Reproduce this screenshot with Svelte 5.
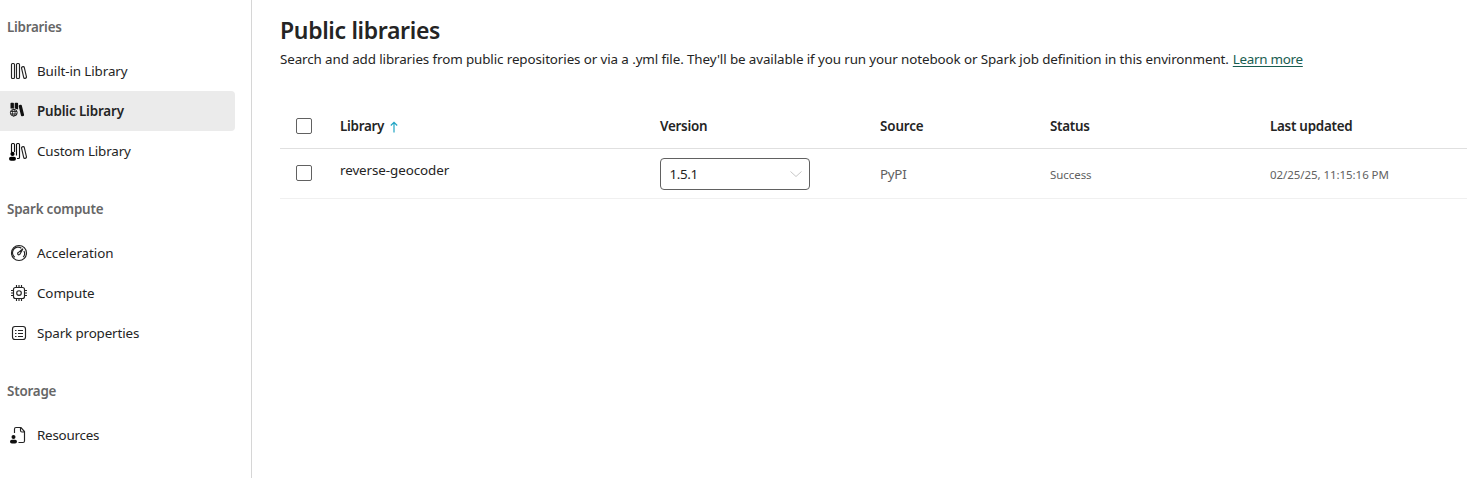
<script>
  const groups = [
    { title: 'Libraries', ls: -0.26, items: [
      { label: 'Built-in Library', icon: 'books', ls: -0.1 },
      { label: 'Public Library', icon: 'public', active: true, ls: -0.15 },
      { label: 'Custom Library', icon: 'custom', ls: -0.16 }
    ] },
    { title: 'Spark compute', ls: -0.19, items: [
      { label: 'Acceleration', icon: 'gauge', ls: -0.09 },
      { label: 'Compute', icon: 'chip', ls: -0.09 },
      { label: 'Spark properties', icon: 'list', ls: -0.14 }
    ] },
    { title: 'Storage', ls: -0.2, items: [{ label: 'Resources', icon: 'resources', ls: -0.24 }] }
  ];
</script>

<div class="page">
  <nav>
    {#each groups as g}
      <section>
        <h2><span style:letter-spacing="{g.ls}px">{g.title}</span></h2>
        {#each g.items as item}
          <div class="item" class:active={item.active}>
            <svg class="icon" viewBox="0 0 20 20" fill="none" stroke="#242424" stroke-width="1.15">
              {#if item.icon === 'books'}
                <rect x="2.5" y="2.5" width="3" height="15" rx="1" />
                <rect x="7.5" y="2.5" width="3" height="15" rx="1" />
                <rect x="13.6" y="5.6" width="2.8" height="11.8" rx="1" transform="rotate(-13 15 11.5)" />
              {:else if item.icon === 'public'}
                <g fill="#111" stroke="none">
                  <path d="M1.500 2.500q0-.8.8-.8h1.800q.8 0 .8.800V7.600H1.500zM5.700 2.500q0-.8.8-.8h1.800q.8 0 .8.800V8.500L5.700 7.500z" />
                  <rect x="10.800" y="3.800" width="3.200" height="11.400" rx="1" transform="rotate(-14 12.400 9.500)" />
                </g>
                <circle cx="4.800" cy="11.700" r="3.400" stroke="#111" stroke-width=".9" />
                <path d="M1.500 10.500h6.600M1.500 13h6.600" stroke="#111" stroke-width=".8" />
                <ellipse cx="4.800" cy="11.700" rx="1.300" ry="3.400" stroke="#111" stroke-width=".8" />
              {:else if item.icon === 'custom'}
                <path d="M2.500 11V3.500q0-1 1-1h1q1 0 1 1V11" stroke="#111" />
                <path d="M7.500 14.500v-11q0-1 1-1h1q1 0 1 1v13q0 1-1 1H8" stroke="#111" />
                <rect x="13.600" y="5.600" width="2.800" height="11.800" rx="1" transform="rotate(-13 15 11.500)" />
                <circle cx="3.500" cy="12.900" r="2.100" fill="#000" stroke="none" />
                <rect x="0" y="15.700" width="7" height="4.100" rx="2" fill="#000" stroke="none" />
              {:else if item.icon === 'gauge'}
                <circle cx="10" cy="10" r="7.500" />
                <path d="M5.800 14.200a5.400 5.400 0 0 1 6.600-9M14.900 8a5.400 5.400 0 0 1-.7 6.200" />
                <path d="M14 5.800 9.200 9.600a1.200 1.200 0 1 0 1.700 1.600z" />
              {:else if item.icon === 'chip'}
                <rect x="4.500" y="4.500" width="11" height="11" rx="2" />
                <circle cx="10" cy="10" r="2.300" />
                <path d="M7.500 2v2.500M10 2v2.500M12.500 2v2.500M7.500 15.500V18M10 15.500V18M12.500 15.500V18M2 7.500h2.500M2 10h2.500M2 12.500h2.500M15.500 7.500H18M15.500 10H18M15.500 12.500H18" />
              {:else if item.icon === 'list'}
                <rect x="3.500" y="3.500" width="13" height="13" rx="2.500" />
                <path d="M6 7.500h1.500M6 10.500h1.500M6 13.500h1.500M9 7.500h5M9 10.500h5M9 13.500h5" />
              {:else}
                <path d="M5.500 8V4q0-1.500 1.500-1.500h5L15.500 6.500V16q0 1.500-1.500 1.500H9.500M11.500 2.500V5.500q0 1.500 1.500 1.500h2.500" />
                <circle cx="4.500" cy="12" r="2" fill="#111" stroke="none" />
                <rect x="1" y="14.700" width="7" height="3.800" rx="1.900" fill="#111" stroke="none" />
              {/if}
            </svg>
            <span style:letter-spacing="{item.ls}px">{item.label}</span>
          </div>
        {/each}
      </section>
    {/each}
  </nav>
  <main>
    <h1>Public libraries</h1>
    <p><span class="desc">Search and add libraries from public repositories or via a .yml file. They'll be available if you run your notebook or Spark job definition in this environment.</span><a class="learn" href="#learn">Learn more</a></p>
    <div class="table">
      <div class="row head">
        <div class="check"><i></i></div>
        <div class="lib">Library<svg class="sort" viewBox="0 0 10 12"><path d="M5 11.500V1.500M1.800 4.500 5 1.300l3.200 3.200" fill="none" stroke="#22a5c4" stroke-width="1.200" /></svg></div>
        <div>Version</div>
        <div class="source">Source</div>
        <div>Status</div>
        <div>Last updated</div>
      </div>
      <div class="row body">
        <div class="check"><i></i></div>
        <div class="name">reverse-geocoder</div>
        <div class="select"><span>1.5.1</span><svg viewBox="0 0 12 8"><path d="m.5 1.500 5.500 5 5.500-5" fill="none" stroke="#c8c8c8" /></svg></div>
        <div class="src">PyPI</div>
        <div class="small">Success</div>
        <div class="small">02/25/25, 11:15:16 PM</div>
      </div>
    </div>
  </main>
</div>

<style>
  :global(body) { background: #fff; overflow: hidden; }
  .page { display: flex; height: 478px; overflow: hidden; font: 13.4px/20px 'Noto Sans', sans-serif; color: #242424; }
  nav { box-sizing: border-box; flex: 0 0 252px; padding: 3px 16px 0 0; border-right: 1px solid #d6d6d6; }
  section + section { margin-top: 14px; }
  h2 { display: flex; align-items: center; height: 48px; margin: 0; padding-left: 7px; font-size: 13.4px; font-weight: 600; color: #666; }
  .item { display: flex; align-items: center; height: 40px; padding-left: 9px; gap: 8px; border-radius: 0 4px 4px 0; white-space: nowrap; }
  .active { background: #ebebeb; font-weight: 600; }
  .icon { width: 20px; height: 20px; flex: none; }
  main { flex: 1; min-width: 0; padding: 14px 0 0 28px; }
  h1 { margin: 0; font-size: 23px; line-height: 32px; font-weight: 600; letter-spacing: -.34px; }
  p { display: flex; gap: 4px; margin: 3px 0 0; white-space: nowrap; }
  .desc { letter-spacing: -.107px; }
  .learn { letter-spacing: -.28px; color: #185c50; text-underline-offset: 2px; }
  .table { margin-top: 35px; }
  .row { display: grid; grid-template-columns: 60px 320px 220px 170px 220px 1fr; align-items: center; white-space: nowrap; }
  .head { height: 44px; border-bottom: 1px solid #e0e0e0; font-weight: 600; letter-spacing: -.26px; }
  .source { letter-spacing: -.12px; }
  .body { height: 49px; border-bottom: 1px solid #f0f0f0; }
  .check { padding-left: 16px; }
  .check i { display: block; box-sizing: border-box; width: 16px; height: 16px; border: 1px solid #616161; border-radius: 2px; }
  .body .check { padding-bottom: 2px; }
  .lib { display: flex; align-items: center; gap: 5px; }
  .sort { width: 10px; height: 12px; margin-top: 2px; }
  .name { padding-bottom: 8px; letter-spacing: -.08px; }
  .select { box-sizing: border-box; display: flex; align-items: center; justify-content: space-between; width: 150px; height: 32px; padding: 0 7px 0 8.500px; border: 1px solid #616161; border-radius: 4px; letter-spacing: -.35px; }
  .select svg { width: 12px; height: 8px; }
  .src, .small { color: #616161; }
  .src { letter-spacing: -.3px; }
  .small { padding-top: 2px; font-size: 11.500px; letter-spacing: -.06px; }
</style>
